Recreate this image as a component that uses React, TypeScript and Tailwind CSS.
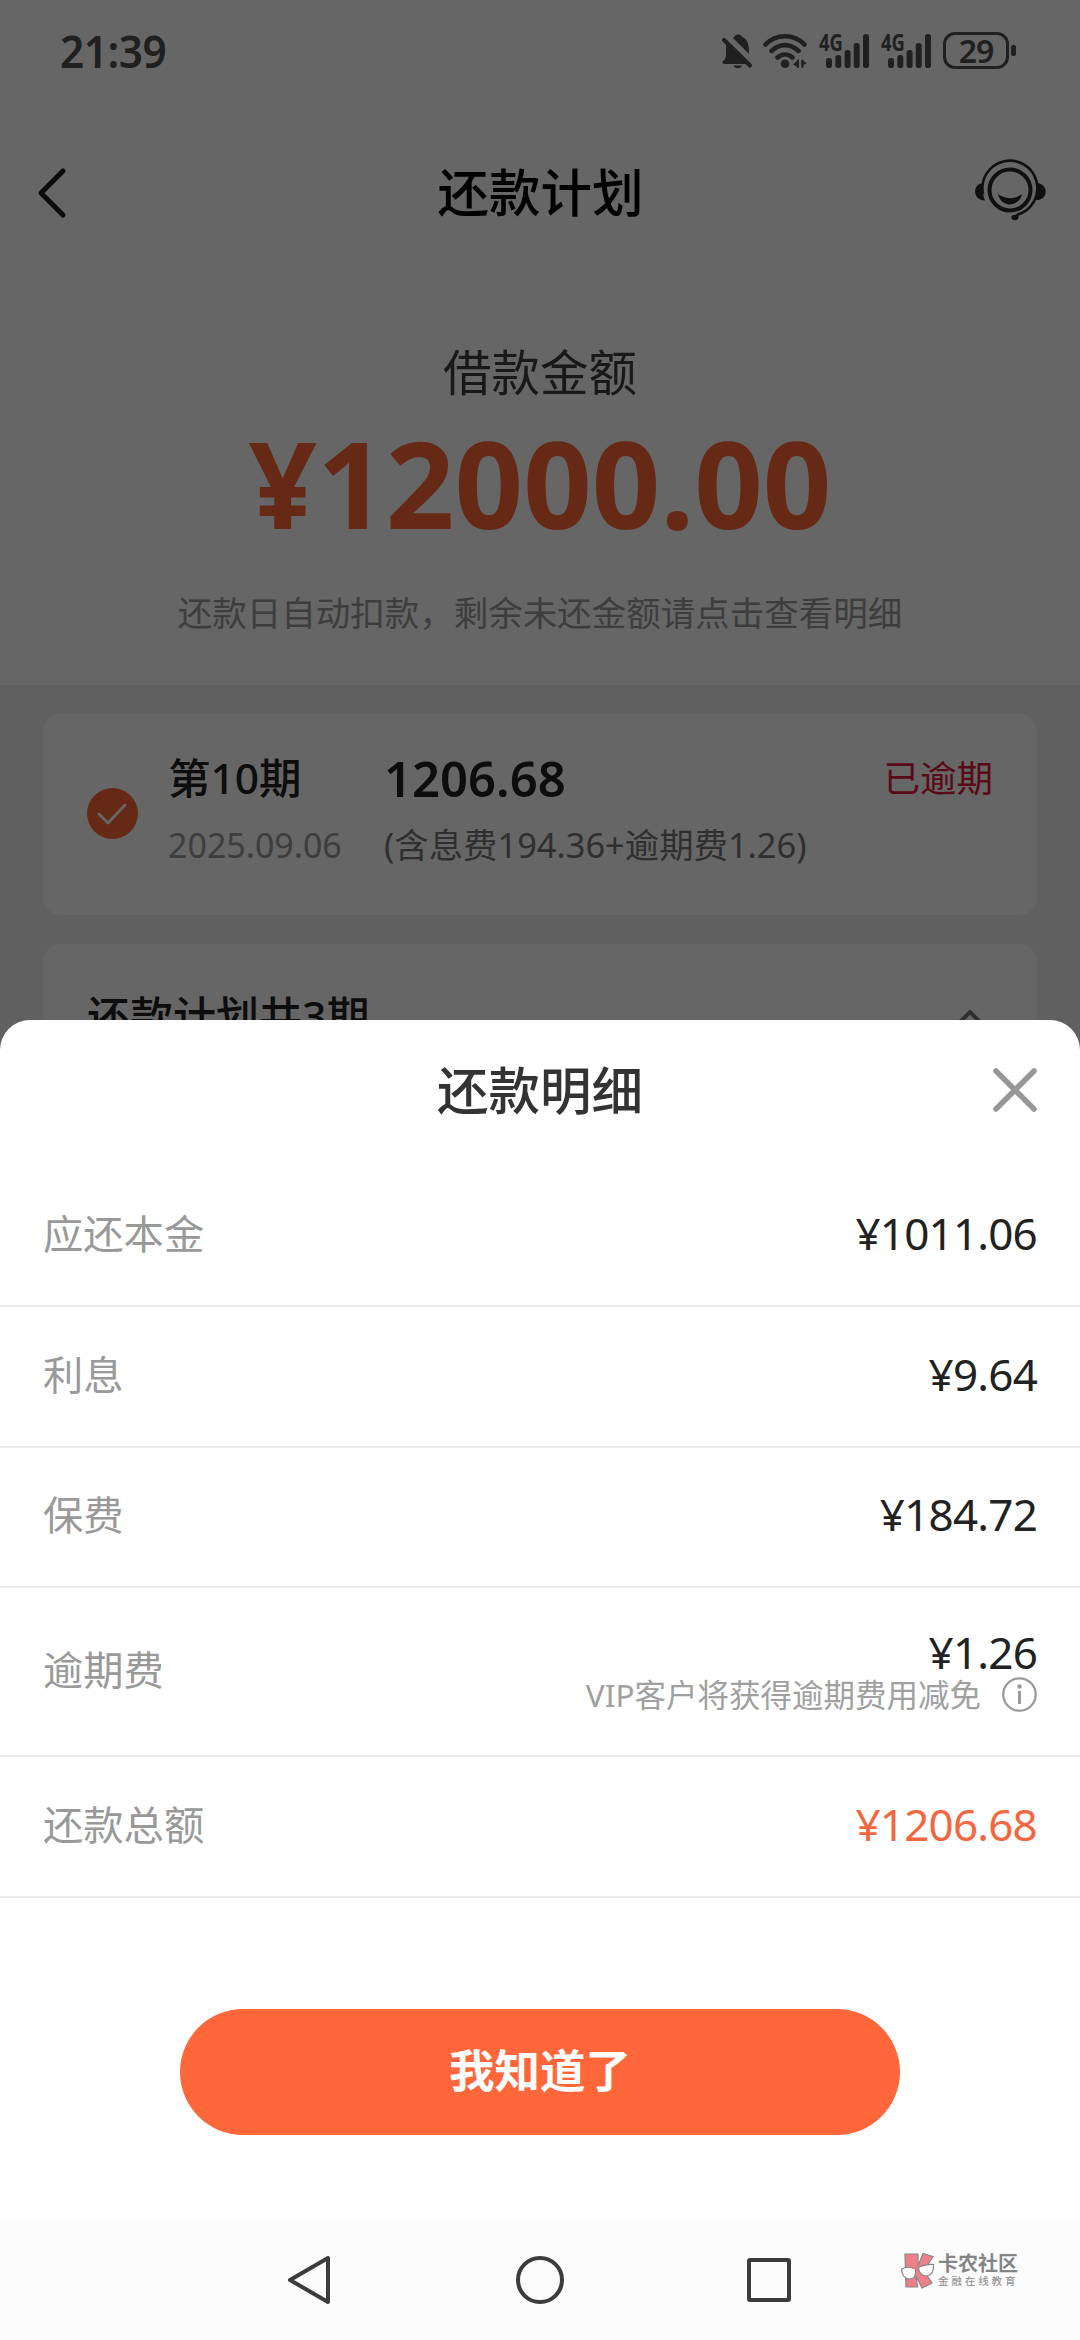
import React from "react";

const CJK = "font-['Noto_Sans_CJK_SC',sans-serif]";
const NUM = "font-['Noto_Sans','Noto_Sans_CJK_SC',sans-serif]";

function Signal() {
  return (
    <div className="relative h-[40px] w-[52px]">
      <svg width="52" height="40" viewBox="0 0 52 40" fill="#505050">
        <rect x="7" y="27" width="6" height="10" rx="2.8" />
        <rect x="16.3" y="24" width="6" height="13" rx="2.8" />
        <rect x="25.6" y="19" width="6" height="18" rx="2.8" />
        <rect x="34.7" y="12" width="6" height="25" rx="2.8" />
        <rect x="44" y="3" width="6" height="34" rx="2.8" />
      </svg>
      <span className={`${NUM} absolute left-0 top-[-4px] origin-left scale-x-[0.8] text-[23px] font-bold leading-[30px] text-[#505050]`}>4G</span>
    </div>
  );
}

function StatusBar() {
  return (
    <div className="flex h-[101px] items-center justify-between pl-[60px] pr-[64px] text-[#505050]">
      <span className={`${NUM} origin-left scale-x-[0.94] text-[45px] font-semibold leading-none tracking-[-0.5px]`}>21:39</span>
      <div className="flex items-center">
        <svg width="42" height="40" viewBox="0 0 42 40" fill="#505050">
          <path d="M12 7C14 5.500 14 3.500 17 3.500S20 5 22 6.500C27 9 28 14 28 23Z" />
          <path d="M5 11.500L26 33H3.500C1 33 1 29.500 3 29.500C5.500 27 5 23 5 18Z" />
          <path d="M12.500 34.500H21C20 38.200 13.500 38.200 12.500 34.500Z" />
          <path d="M3 9L29 34.500" stroke="#505050" strokeWidth="4.200" strokeLinecap="round" />
        </svg>
        <svg width="56" height="40" viewBox="0 0 56 40" fill="none" stroke="#505050" strokeWidth="4.600" strokeLinecap="round">
          <path d="M2.500 13.500C13 2.500 31 2.500 41.500 13.500M8.500 20C16.500 12.200 27.500 12.200 35.500 20M14.500 26.500C19 22.500 25 22.500 29.500 26.500" />
          <circle cx="22" cy="32.700" r="4.300" fill="#505050" stroke="none" />
          <path d="M36 28V37L30 33.500ZM38.500 28V37M38.500 29L44 32L38.500 35Z" fill="#505050" stroke="none" />
          <path d="M35 29.500V36M39.500 29.500V36" strokeWidth="2" />
        </svg>
        <Signal />
        <div className="w-[10px]" />
        <Signal />
        <div className="ml-[10px] flex h-[37px] w-[66px] items-center justify-center rounded-[12px] border-[3px] border-[#505050]">
          <span className={`${NUM} text-[32px] font-semibold leading-none tracking-[-1px]`}>29</span>
        </div>
        <div className="ml-[2px] h-[11px] w-[5px] rounded-[2px] bg-[#505050]" />
      </div>
    </div>
  );
}

function TitleBar() {
  return (
    <div className="flex h-[184px] items-center justify-between pl-[36px] pr-[33px]">
      <svg className="mb-[1px]" width="74" height="56" viewBox="0 0 74 56" fill="none" stroke="#1c1c1c" strokeWidth="5" strokeLinecap="round" strokeLinejoin="round">
        <path d="M27 6L5 28L27 50" />
      </svg>
      <h1 className={`${CJK} mb-[6px] text-[51.500px] font-medium leading-none text-black`}>还款计划</h1>
      <svg className="mb-[9px]" width="76" height="64" viewBox="0 0 76 64" fill="none" stroke="#2a2a2a">
        <path d="M12 37A27.500 27.500 0 1 1 47 57.500L44 60" strokeWidth="2.600" />
        <circle cx="39" cy="33" r="20.500" strokeWidth="4" />
        <path d="M27 37C34 42.500 44 42.500 51 37C48 51 30 51 27 37Z" fill="#2a2a2a" stroke="none" />
        <path d="M13 26C1 26 1 43.500 14 43.500Q10.500 35 13 26ZM65 26C78 26 78 43.500 65 43Q68 35 65 26Z" fill="#2a2a2a" stroke="none" />
        <ellipse cx="44" cy="60.500" rx="3.600" ry="2.800" fill="#2a2a2a" stroke="none" />
      </svg>
    </div>
  );
}

function Page() {
  return (
    <div className="flex h-[2340px] flex-col bg-[#f0f0f0]">
      <div className="h-[685px] bg-white">
        <StatusBar />
        <TitleBar />
        <div className="flex flex-col items-center">
          <p className={`${CJK} mt-[60px] text-[48.500px] leading-[50px] text-[#404040]`}>借款金额</p>
          <p className={`${NUM} mt-[28px] text-[120px] font-bold leading-[120px] text-[#ff6638]`}>¥12000.00</p>
          <p className={`${CJK} mt-[48px] text-[34.500px] leading-[40px] text-[#999999]`}>还款日自动扣款，剩余未还金额请点击查看明细</p>
        </div>
      </div>
      <div className="mx-[43px] mt-[29px] flex h-[201px] items-start rounded-[18px] bg-white pl-[44px] pr-[44px] pt-[39px]">
        <svg className="mt-[35px]" width="51" height="51" viewBox="0 0 51 51" fill="none">
          <circle cx="25.500" cy="25.500" r="25.500" fill="#ff6638" />
          <path d="M12 26L21 35L38 17" stroke="#fff" strokeWidth="2.800" strokeLinecap="round" strokeLinejoin="round" />
        </svg>
        <div className="ml-[30px] w-[216px]">
          <p className={`${NUM} text-[42.500px] font-medium leading-[50px] text-[#222]`}>第10期</p>
          <p className={`${NUM} mt-[17px] text-[34px] leading-[50px] text-[#999]`}>2025.09.06</p>
        </div>
        <div className="flex-1">
          <p className={`${NUM} text-[49px] font-semibold leading-[50px] text-[#222]`}>1206.68</p>
          <p className={`${NUM} mt-[17px] whitespace-nowrap text-[34.400px] leading-[50px] text-[#777]`}>(含息费194.36+逾期费1.26)</p>
        </div>
        <p className={`${CJK} text-[36.500px] leading-[48px] text-[#e0173c]`}>已逾期</p>
      </div>
      <div className="mx-[43px] mt-[29px] flex flex-1 items-start justify-between rounded-t-[18px] bg-white pl-[44px] pr-[52px] pt-[48px]">
        <p className={`${NUM} text-[43px] font-medium leading-[50px] text-[#222]`}>还款计划共3期</p>
        <svg className="mt-[16px]" width="30" height="20" viewBox="0 0 30 20" fill="none" stroke="#777" strokeWidth="4">
          <path d="M2 17L15 4L28 17" />
        </svg>
      </div>
    </div>
  );
}

function Row({ label, value, accent = false }: { label: string; value: string; accent?: boolean }) {
  return (
    <div className="flex h-[140.500px] items-center justify-between border-b-2 border-[#ebebeb] px-[43px]">
      <span className={`${CJK} mb-[7px] text-[40.300px] leading-none text-[#999]`}>{label}</span>
      <span className={`${NUM} mb-[5px] text-[44px] leading-none tracking-[-0.8px] ${accent ? "text-[#f2673f]" : "text-[#222]"}`}>{value}</span>
    </div>
  );
}

function Logo() {
  return (
    <div className="absolute left-[900px] top-[2251px] flex items-start">
      <svg width="36" height="39" viewBox="0 0 36 39" stroke="#8a8486" strokeWidth="1.200">
        <path d="M5 3H18V15L23 2.500L33 5.500L24 20L32 32L22 37L16 25L17.500 36H6Z" fill="#ef8089" />
        <path d="M1.500 18Q8 14.500 15.500 18Q17 28 9 28Q2 27 1.500 18ZM18.500 16.500Q25 13 33.500 13.500Q34 24 27 25Q19 25 18.500 16.500Z" fill="#fff" />
      </svg>
      <div className="ml-[2px] mt-[3px]">
        <p className={`${CJK} text-[20px] font-bold leading-[18px] text-[#858585]`}>卡农社区</p>
        <p className={`${CJK} mt-[3px] text-[10.500px] font-medium leading-[12px] tracking-[2.900px] text-[#999]`}>金融在线教育</p>
      </div>
    </div>
  );
}

function Sheet() {
  return (
    <div className="absolute inset-x-0 bottom-0 flex h-[1320px] flex-col rounded-t-[30px] bg-white">
      <div className="flex h-[146.500px] items-start justify-between px-[43px] pt-[43px]">
        <div className="w-[44px]" />
        <h2 className={`${CJK} text-[51.500px] font-medium leading-[50px] text-[#333]`}>还款明细</h2>
        <svg className="mt-[5px]" width="44" height="44" viewBox="0 0 44 44" stroke="#979797" strokeWidth="5.500" strokeLinecap="round">
          <path d="M3 3L41 41M41 3L3 41" />
        </svg>
      </div>
      <Row label="应还本金" value="¥1011.06" />
      <Row label="利息" value="¥9.64" />
      <Row label="保费" value="¥184.72" />
      <div className="flex h-[169px] items-center justify-between border-b-2 border-[#ebebeb] px-[43px]">
        <span className={`${CJK} mb-[6px] text-[40.300px] leading-none text-[#999]`}>逾期费</span>
        <div className="flex flex-col items-end">
          <span className={`${NUM} text-[44px] leading-[46px] tracking-[-0.800px] text-[#222]`}>¥1.26</span>
          <div className="flex items-center gap-[21px]">
            <span className={`${NUM} text-[31.500px] leading-[40px] text-[#a0a0a0]`}>VIP客户将获得逾期费用减免</span>
            <svg width="35" height="35" viewBox="0 0 35 35" fill="none">
              <circle cx="17.500" cy="17.500" r="16.200" stroke="#9a9a9a" strokeWidth="2.300" />
              <circle cx="17.500" cy="9.500" r="2.200" fill="#9a9a9a" />
              <path d="M17.500 14V27" stroke="#9a9a9a" strokeWidth="3" />
            </svg>
          </div>
        </div>
      </div>
      <Row label="还款总额" value="¥1206.68" accent />
      <button className={`${CJK} mx-auto mt-[111px] h-[126px] w-[720px] rounded-full bg-[#ff663a] pb-[6px] text-[45.500px] font-bold leading-none text-white`}>我知道了</button>
      <nav className="mt-auto flex h-[121px] items-center justify-center bg-[#fcfcfc]">
        <svg width="508" height="50" viewBox="0 0 508 50" fill="none" stroke="#3c3c3c" strokeWidth="4" strokeLinejoin="round">
          <path d="M4 25L42 3V47Z" />
          <circle cx="254" cy="25" r="22" />
          <rect x="463" y="5" width="40" height="40" rx="1" />
        </svg>
      </nav>
    </div>
  );
}

export default function App() {
  return (
    <div className="relative h-[2340px] w-[1080px] overflow-hidden">
      <Page />
      <div className="absolute inset-0 bg-black/60" />
      <Sheet />
      <Logo />
    </div>
  );
}
